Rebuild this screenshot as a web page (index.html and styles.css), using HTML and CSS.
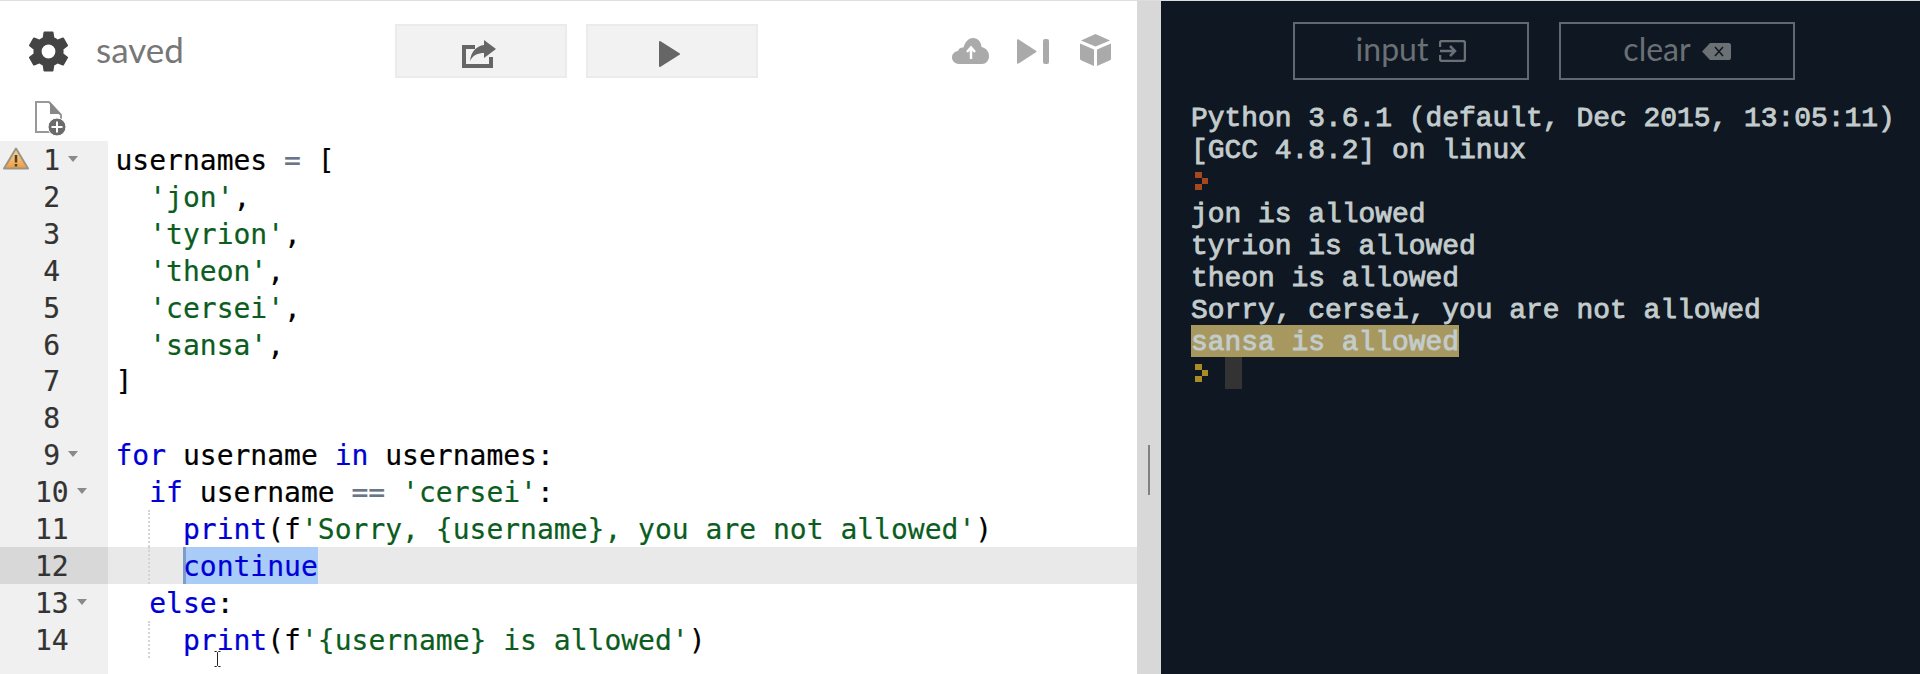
FILE: index.html
```html
<!DOCTYPE html>
<html lang="en">
<head>
<meta charset="utf-8">
<title>Python editor</title>
<link rel="stylesheet" href="styles.css">
</head>
<body>
<main class="app">
  <section class="editor">
    <header class="toolbar">
      <div class="status">
        <svg class="gear" viewBox="2.7 2.2 18.6 19.6"><path fill-rule="evenodd" d="M19.14 12.94c.04-.3.06-.61.06-.94 0-.32-.02-.64-.07-.94l2.03-1.58a.49.49 0 0 0 .12-.61l-1.92-3.32a.488.488 0 0 0-.59-.22l-2.39.96c-.5-.38-1.03-.7-1.62-.94l-.36-2.54a.484.484 0 0 0-.48-.41h-3.84c-.24 0-.43.17-.47.41l-.36 2.54c-.59.24-1.13.57-1.62.94l-2.39-.96c-.22-.08-.47 0-.59.22L2.74 8.87c-.12.21-.08.47.12.61l2.03 1.58c-.05.3-.09.63-.09.94s.02.64.07.94l-2.03 1.58a.49.49 0 0 0-.12.61l1.92 3.32c.12.22.37.29.59.22l2.39-.96c.5.38 1.03.7 1.62.94l.36 2.54c.05.24.24.41.48.41h3.84c.24 0 .44-.17.47-.41l.36-2.54c.59-.24 1.13-.56 1.62-.94l2.39.96c.22.08.47 0 .59-.22l1.92-3.32c.12-.22.07-.47-.12-.61l-2.01-1.58zM12 15.3a3.3 3.3 0 1 1 0-6.6 3.3 3.3 0 0 1 0 6.6z"/></svg>
        <span class="saved">saved</span>
      </div>
      <div class="actions">
        <button class="action">
          <svg class="share" viewBox="0 0 34 28"><path class="share-box" d="M13 7H2v19h27V17"/><path d="M22 0l12 9-12 9v-5c-6 0-11 2-14 8 1-9 6-15 14-16z"/></svg>
        </button>
        <button class="action">
          <svg class="play" viewBox="0 0 21 26"><path d="M1 1l19 12L1 25z" stroke-linejoin="round" stroke-width="2"/></svg>
        </button>
      </div>
      <div class="tools">
        <svg class="cloud" viewBox="0 0 37 26"><path d="M7 26C3 26 0 23 0 19.500S2.500 13.500 6 13C7 10 9.500 9 11.500 9.500 13 4 16.500 0 21 0c5 0 8 3.500 8.500 9 4.500 1 7.500 4.500 7.500 9 0 4.500-3 8-7 8z"/><path class="cloud-arrow" d="M19 21V10M15 14l4-4.500 4 4.500"/></svg>
        <svg class="skip" viewBox="0 0 32 25"><path d="M0 1.500C0 0 1 0 2 .7l17 11c.7.5.7 1.100 0 1.600l-17 11c-1 .7-2 .7-2-.8z"/><rect x="26" width="6" height="25" rx="2"/></svg>
        <svg class="cube" viewBox="0 0 31 32"><path d="M15.500 0L30 6.500 15.500 12.500 1 6.500zM0 9.500l14 6V32L1.500 26.500C.5 26 0 25.500 0 24.500zM31 9.500l-14 6V32l12.500-5.500c1-.5 1.500-1 1.500-2z"/></svg>
      </div>
    </header>
    <div class="file-row">
      <svg class="new-file" viewBox="0 0 31 35">
        <path class="sheet" d="M1 1h13l12 13v17H1z"/>
        <path class="fold-corner" d="M15 1l11 12H15z"/>
        <circle cx="22" cy="26" r="9" class="badge"/>
        <path class="badge-plus" d="M22 20.500v11M16.500 26h11"/>
      </svg>
    </div>
    <div class="code-area">
      <div class="gutter">
        <div class="cell">
          <svg class="warning" viewBox="0 0 26 23"><defs><linearGradient id="warn" x1="0" y1="0" x2="0" y2="1"><stop offset="0" stop-color="#f8dca0"/><stop offset="1" stop-color="#f09b3c"/></linearGradient></defs><path d="M13 1.500L25 21.500H1z" fill="url(#warn)" stroke="#9b9488" stroke-width="2" stroke-linejoin="round"/><path d="M13 8v7.500M13 17v2.500" stroke="#4c4030" stroke-width="2.500"/></svg>
          <span class="num foldable">1</span>
        </div>
        <div class="cell"><span class="num">2</span></div>
        <div class="cell"><span class="num">3</span></div>
        <div class="cell"><span class="num">4</span></div>
        <div class="cell"><span class="num">5</span></div>
        <div class="cell"><span class="num">6</span></div>
        <div class="cell"><span class="num">7</span></div>
        <div class="cell"><span class="num">8</span></div>
        <div class="cell"><span class="num foldable">9</span></div>
        <div class="cell"><span class="num foldable">10</span></div>
        <div class="cell"><span class="num">11</span></div>
        <div class="cell cell-active"><span class="num">12</span></div>
        <div class="cell"><span class="num foldable">13</span></div>
        <div class="cell"><span class="num">14</span></div>
      </div>
      <pre class="code"><div class="line">usernames <span class="op">=</span> [</div><div class="line">  <span class="str">'jon'</span>,</div><div class="line">  <span class="str">'tyrion'</span>,</div><div class="line">  <span class="str">'theon'</span>,</div><div class="line">  <span class="str">'cersei'</span>,</div><div class="line">  <span class="str">'sansa'</span>,</div><div class="line">]</div><div class="line"> </div><div class="line"><span class="kw">for</span> username <span class="kw">in</span> usernames:</div><div class="line">  <span class="kw">if</span> username <span class="op">==</span> <span class="str">'cersei'</span>:</div><div class="line guide">    <span class="kw">print</span>(f<span class="str">'Sorry, {username}, you are not allowed'</span>)</div><div class="line guide line-active">    <span class="kw selection">continue</span></div><div class="line">  <span class="kw">else</span>:</div><div class="line guide">    <span class="kw">print</span>(f<span class="str">'{username} is allowed'</span>)</div></pre>
      <svg class="ibeam" viewBox="0 0 7 16"><path d="M.5.500h2l1 1 1-1h2M3.500 1.500v13M.5 15.500h2l1-1 1 1h2"/></svg>
    </div>
  </section>
  <div class="divider"><span class="handle"></span></div>
  <section class="console">
    <div class="console-actions">
      <button class="outline"><span class="outline-label">input</span>
        <svg class="input-icon" viewBox="0 0 27 22"><path class="icon-line" d="M1 7V3c0-1 1-2 2-2h21c1 0 2 1 2 2v16c0 1-1 2-2 2H3c-1 0-2-1-2-2v-4M1 11h15M11 6l5 5-5 5"/></svg>
      </button>
      <button class="outline"><span class="outline-label">clear</span>
        <svg class="clear-icon" viewBox="0 0 29 17"><path class="clear-body" d="M8 0h19c1 0 2 1 2 2v13c0 1-1 2-2 2H8L0 8.500z"/><path class="clear-x" d="M13 4l8 9M21 4l-8 9"/></svg>
      </button>
    </div>
    <pre class="output"><div>Python 3.6.1 (default, Dec 2015, 13:05:11)</div><div>[GCC 4.8.2] on linux</div><div class="prompt-line"><svg class="prompt prompt-done" viewBox="0 0 13 18"><path d="M0 0h7v6H0zM7 6h6v6H7zM0 12h7v6H0z"/></svg></div><div>jon is allowed</div><div>tyrion is allowed</div><div>theon is allowed</div><div>Sorry, cersei, you are not allowed</div><div><span class="highlight">sansa is allowed</span></div><div class="prompt-line"><svg class="prompt prompt-live" viewBox="0 0 13 18"><path d="M0 0h7v6H0zM7 6h6v6H7zM0 12h7v6H0z"/></svg><span class="cursor"></span></div></pre>
  </section>
</main>
</body>
</html>
```
FILE: styles.css
```css
* { box-sizing: border-box; }
html, body { margin: 0; height: 100%; overflow: hidden; }
body { border-top: 1px solid #dedede; background: #fff; font-family: "Lato", "Open Sans", sans-serif; }
.app { display: flex; height: 673px; }

.editor { width: 1137px; display: flex; flex-direction: column; background: #fff; }
.toolbar { display: flex; align-items: center; height: 100px; padding: 0 26px 0 29px; flex: none; }
.status { display: flex; align-items: center; gap: 28px; width: 366px; flex: none; }
.gear { width: 39px; height: 41px; fill: #444; }
.saved { font-size: 35px; color: #777; margin-top: -4px; }
.actions { display: flex; gap: 19px; }
.action { width: 172px; height: 54px; padding: 0; display: flex; align-items: center; justify-content: center; background: #f2f2f2; border: 2px solid #ebebeb; }
.share { width: 34px; height: 28px; fill: #666; margin: 6px 4px 0 0; }
.share-box { fill: none; stroke: #666; stroke-width: 4; }
.play { width: 21px; height: 26px; fill: #666; stroke: #666; margin: 6px 5px 0 0; }
.tools { display: flex; align-items: center; gap: 28px; margin-left: auto; fill: #aaa; }
.cloud { width: 37px; height: 26px; }
.cloud-arrow { fill: none; stroke: #fff; stroke-width: 2.5; }
.skip { width: 32px; height: 25px; }
.cube { width: 31px; height: 32px; margin: -2px 0 0 3px; }

.file-row { height: 40px; flex: none; padding-left: 35px; }
.new-file { width: 31px; height: 35px; display: block; }
.sheet { fill: #fff; stroke: #999; stroke-width: 2; }
.fold-corner { fill: #888; }
.badge { fill: #6b6b6b; stroke: #fff; stroke-width: 1; }
.badge-plus { stroke: #fff; stroke-width: 2; fill: none; }

.code-area { display: flex; flex: 1; position: relative; min-height: 0; }
.gutter { width: 108px; flex: none; background: #f0f0f0; font: 28px/39.5px "DejaVu Sans Mono", monospace; color: #333; -webkit-text-stroke: 0.2px; }
.cell { height: 36.92px; padding: 0 39.5px 0 35px; position: relative; text-align: center; }
.cell-active { background: #d8d8d8; }
.num { position: relative; display: inline-block; }
.foldable::after { content: ""; position: absolute; top: 15px; left: calc(100% + 8px); border-style: solid; border-width: 6px 5px 0; border-color: #8a8a8a transparent transparent; }
.warning { position: absolute; left: 3px; top: 6px; width: 26px; height: 23px; }
.code { flex: 1; margin: 0; padding: 0; font: 28px/39.5px "DejaVu Sans Mono", monospace; color: #000; -webkit-text-stroke: 0.2px; }
.line { height: 36.92px; padding-left: 7.5px; position: relative; }
.line-active { background: #e9e9e9; }
.guide::before { content: ""; position: absolute; left: 40px; top: 0; bottom: 0; border-left: 2px dotted #d4d4d4; }
.kw { color: #0000d6; }
.str { color: #0b5d1e; }
.op { color: #687687; }
.selection { display: inline-block; height: 36.92px; vertical-align: top; background: #a9cbf8; box-shadow: inset 3px 0 #7c9cc9; }
.ibeam { position: absolute; left: 214px; top: 510px; width: 7px; height: 16px; fill: none; stroke: #222; stroke-width: 1; }

.divider { width: 24px; flex: none; background: #d8d8d8; display: flex; justify-content: center; padding-top: 444px; }
.handle { width: 2px; height: 50px; background: #808080; }

.console { flex: 1; background: #0f1722; min-width: 0; }
.console-actions { display: flex; gap: 30px; padding: 21px 0 0 132px; height: 100px; }
.outline { width: 236px; height: 58px; padding: 0; display: flex; align-items: center; justify-content: center; gap: 11px; background: transparent; border: 2px solid #62686f; color: #6b7075; font: 32px "Lato", sans-serif; }
.outline-label { margin-top: -5px; }
.input-icon { width: 27px; height: 22px; }
.icon-line { fill: none; stroke: #6b7075; stroke-width: 2.5; }
.clear-icon { width: 29px; height: 17px; }
.clear-body { fill: #6b7075; }
.clear-x { fill: none; stroke: #0f1722; stroke-width: 1.5; }
.output { margin: 0; padding-left: 30px; font: 27.93px/36px "Liberation Mono", monospace; color: #c3cccc; -webkit-text-stroke: 0.9px; }
.output > div { height: 32px; }
.highlight { display: inline-block; height: 32px; vertical-align: top; background: #a79860; }
.prompt-line { display: flex; align-items: center; }
.prompt { width: 13px; height: 18px; margin-left: 4px; }
.prompt-done { fill: #a5481f; }
.prompt-live { fill: #a98c25; }
.cursor { width: 17px; height: 32px; margin-left: 17px; background: #333; }
```
